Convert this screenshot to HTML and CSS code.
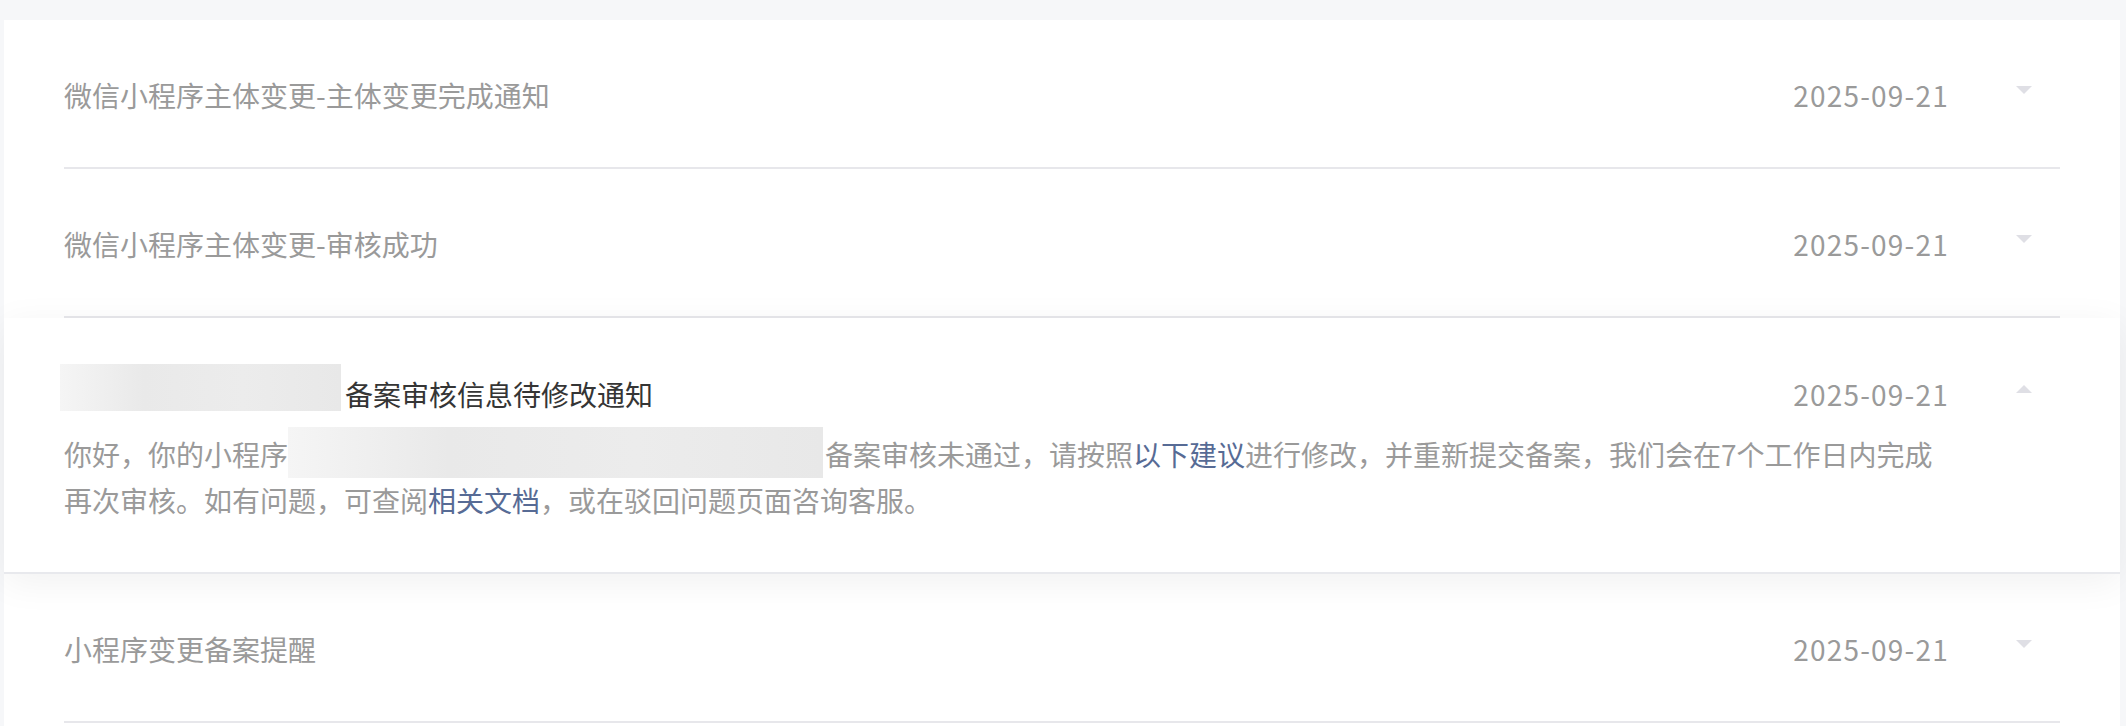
FILE: index.html
```html
<!DOCTYPE html>
<html lang="zh-CN">
<head>
    <meta charset="UTF-8">
    <title>通知</title>
    <link rel="stylesheet" href="styles.css">
</head>
<body>
    <div class="page">
        <div class="card">
            <div class="item">
                <div class="item-inner">
                    <div class="item-head">
                        <div class="item-title">微信小程序主体变更-主体变更完成通知</div>
                        <div class="item-date">2025-09-21</div>
                        <i class="arrow"></i>
                    </div>
                </div>
            </div>
            <div class="item">
                <div class="item-inner">
                    <div class="item-head">
                        <div class="item-title">微信小程序主体变更-审核成功</div>
                        <div class="item-date">2025-09-21</div>
                        <i class="arrow"></i>
                    </div>
                </div>
            </div>
            <div class="item item-open">
                <div class="item-inner">
                    <div class="item-head">
                        <div class="item-title"><span class="mask mask-title"></span>备案审核信息待修改通知</div>
                        <div class="item-date">2025-09-21</div>
                        <i class="arrow arrow-up"></i>
                    </div>
                    <div class="item-body">你好，你的小程序<span class="mask mask-body"></span>备案审核未通过，请按照<a href="#">以下建议</a>进行修改，并重新提交备案，我们会在7个工作日内完成再次审核。如有问题，可查阅<a href="#">相关文档</a>，或在驳回问题页面咨询客服。</div>
                </div>
            </div>
            <div class="item">
                <div class="item-inner">
                    <div class="item-head">
                        <div class="item-title">小程序变更备案提醒</div>
                        <div class="item-date">2025-09-21</div>
                        <i class="arrow"></i>
                    </div>
                </div>
            </div>
        </div>
    </div>
</body>
</html>
```

FILE: styles.css
```css
* {
    margin: 0;
    padding: 0;
    box-sizing: border-box;
}
html, body {
    height: 100%;
    background-color: #f6f7f9;
    font-family: "Noto Sans CJK SC", "Noto Sans", sans-serif;
    overflow: hidden;
}
.page {
    padding: 20px 6px 0 4px;
}
.card {
    background-color: #fff;
    border-radius: 8px;
    padding-bottom: 40px;
}
.item {
    padding: 0 60px;
    background-color: #fff;
}
.item-inner {
    padding: 55px 0 52px;
    border-bottom: 2px solid #e7e7eb;
}
.item-head {
    display: flex;
    align-items: center;
    height: 40px;
}
.item-title {
    flex: 1;
    font-size: 28px;
    line-height: 40px;
    color: #9a9a9a;
    white-space: nowrap;
}
.item-date {
    font-size: 28px;
    line-height: 40px;
    color: #9a9a9a;
    letter-spacing: 1.2px;
    margin-right: 1px;
}
.arrow {
    width: 0;
    height: 0;
    margin: 0 28px 10px 66px;
    border-left: 8px solid transparent;
    border-right: 8px solid transparent;
    border-top: 8px solid #dfdfe5;
}
.arrow-up {
    border-top: 0;
    border-bottom: 8px solid #dfdfe5;
}
.item-open {
    position: relative;
    z-index: 1;
    border-bottom: 2px solid #e8e9ed;
    box-shadow: 0 8px 36px rgba(0, 0, 0, 0.06);
}
.item-open .item-inner {
    border-bottom: 0;
    padding: 56px 0 49px;
}
.item-open .item-title {
    color: #353535;
}
.item-body {
    margin-top: 17px;
    padding-right: 110px;
    font-size: 28px;
    line-height: 46px;
    color: #9a9a9a;
}
.item-body a {
    color: #576b95;
    text-decoration: none;
}
.mask {
    display: inline-block;
    vertical-align: top;
    background: linear-gradient(90deg, #f5f5f5, #e9e9e9 30%, #ececec 65%, #e8e8e8);
}
.mask-title {
    width: 281px;
    height: 47px;
    margin: -10px 4px 3px -4px;
}
.mask-body {
    width: 535px;
    height: 51px;
    margin: -4px 2px -1px 0;
}
```
